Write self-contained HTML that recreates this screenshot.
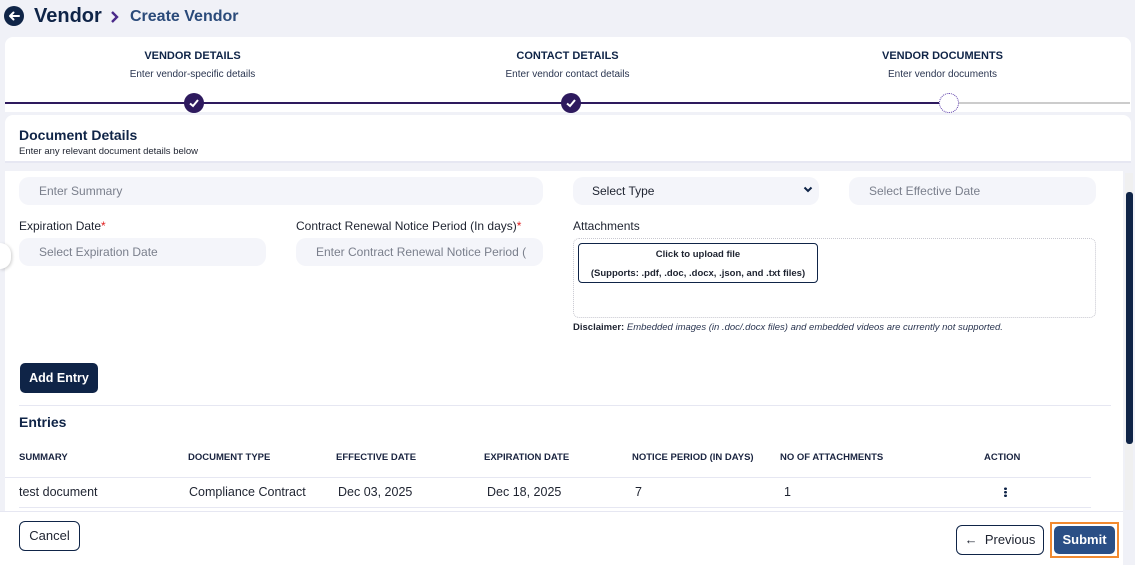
<!DOCTYPE html>
<html><head><meta charset="utf-8"><style>
*{box-sizing:border-box;margin:0;padding:0}
body{width:1135px;height:565px;overflow:hidden;background:#f0f1f7;font-family:"Liberation Sans",sans-serif;position:relative;color:#1a2440}
.a{position:absolute}
.inp{position:absolute;background:#f4f5fa;border-radius:10px;height:28px;font-size:12px;color:#7a7f8c;padding:7px 0 0 20px}
.lbl{position:absolute;font-size:12px;color:#1e2330}
.th{position:absolute;font-size:9.5px;font-weight:bold;color:#1a2440;top:452px}
.td{position:absolute;font-size:12.5px;color:#1e2330;top:485px}
.hl{position:absolute;height:1px;background:#e6e7f2}
</style></head><body>
<div class="a" style="left:4px;top:6px;width:20px;height:20px;border-radius:50%;background:#0f2447"></div>
<svg class="a" style="left:4px;top:6px" width="20" height="20" viewBox="0 0 20 20"><path d="M15 10H6M9.5 6.5L6 10l3.5 3.5" stroke="#fff" stroke-width="2" fill="none" stroke-linecap="round" stroke-linejoin="round"/></svg>
<div class="a" style="left:34px;top:5px;font-size:20px;font-weight:bold;color:#0f2447">Vendor</div>
<svg class="a" style="left:110px;top:10px" width="10" height="14" viewBox="0 0 10 14"><path d="M2 2l5 5-5 5" stroke="#4a2a8a" stroke-width="2.4" fill="none"/></svg>
<div class="a" style="left:130px;top:8px;font-size:16px;font-weight:bold;color:#2a4a7a">Create Vendor</div>
<div class="a" style="left:5px;top:37px;width:1126px;height:75px;background:#fff;border-radius:8px 8px 0 0"></div>
<div class="a" style="left:5px;top:50px;width:375px;text-align:center;font-size:11px;font-weight:bold;color:#0f2447">VENDOR DETAILS</div>
<div class="a" style="left:5px;top:69px;width:375px;text-align:center;font-size:10px;color:#2a3550">Enter vendor-specific details</div>
<div class="a" style="left:380px;top:50px;width:375px;text-align:center;font-size:11px;font-weight:bold;color:#0f2447">CONTACT DETAILS</div>
<div class="a" style="left:380px;top:69px;width:375px;text-align:center;font-size:10px;color:#2a3550">Enter vendor contact details</div>
<div class="a" style="left:755px;top:50px;width:375px;text-align:center;font-size:11px;font-weight:bold;color:#0f2447">VENDOR DOCUMENTS</div>
<div class="a" style="left:755px;top:69px;width:375px;text-align:center;font-size:10px;color:#2a3550">Enter vendor documents</div>
<div class="a" style="left:5px;top:102px;width:935px;height:2px;background:#2e1a5e"></div>
<div class="a" style="left:958px;top:102px;width:172px;height:2px;background:#ccc"></div>
<div class="a" style="left:184px;top:93px;width:20px;height:20px;border-radius:50%;background:#2e1a5e"></div>
<div class="a" style="left:561px;top:93px;width:20px;height:20px;border-radius:50%;background:#2e1a5e"></div>
<svg class="a" style="left:184px;top:93px" width="20" height="20"><path d="M6 10.5l3 2.5 5-6" stroke="#fff" stroke-width="2" fill="none"/></svg>
<svg class="a" style="left:561px;top:93px" width="20" height="20"><path d="M6 10.5l3 2.5 5-6" stroke="#fff" stroke-width="2" fill="none"/></svg>
<div class="a" style="left:939px;top:93px;width:20px;height:20px;border-radius:50%;background:#fff;border:1.5px dotted #5a3aa8"></div>
<div class="a" style="left:5px;top:115px;width:1126px;height:48px;background:#fff;border-radius:8px 8px 0 0;border-bottom:2px solid #e6e7f2"></div>
<div class="a" style="left:19px;top:127px;font-size:14px;font-weight:bold;color:#0f2447">Document Details</div>
<div class="a" style="left:19px;top:146px;font-size:9.5px;color:#1e2330">Enter any relevant document details below</div>
<div class="a" style="left:5px;top:171px;width:1118px;height:340px;background:#fff"></div>
<div class="a" style="left:1125px;top:173px;width:8px;height:337px;background:#f0f0f0"></div>
<div class="a" style="left:1126px;top:192px;width:7px;height:252px;background:#0f2447;border-radius:3px"></div>
<div class="inp" style="left:19px;top:177px;width:524px">Enter Summary</div>
<div class="inp" style="left:573px;top:177px;width:246px;color:#1e2330;padding-left:19px">Select Type</div>
<svg class="a" style="left:803px;top:186px" width="10" height="8"><path d="M1.5 1.5l3.5 3.5 3.5-3.5" stroke="#0f2447" stroke-width="2" fill="none"/></svg>
<div class="inp" style="left:849px;top:177px;width:247px">Select Effective Date</div>
<div class="lbl" style="left:19px;top:219px">Expiration Date<span style="color:#e02020">*</span></div>
<div class="lbl" style="left:296px;top:219px">Contract Renewal Notice Period (In days)<span style="color:#e02020">*</span></div>
<div class="lbl" style="left:573px;top:219px">Attachments</div>
<div class="inp" style="left:19px;top:238px;width:247px">Select Expiration Date</div>
<div class="inp" style="left:296px;top:238px;width:247px">Enter Contract Renewal Notice Period (</div>
<div class="a" style="left:0;top:243px;width:11px;height:26px;border-radius:0 13px 13px 0;background:#fff;box-shadow:1px 1px 3px rgba(0,0,0,.2)"></div>
<div class="a" style="left:573px;top:238px;width:523px;height:80px;border:1px dotted #c8c8d0;border-radius:6px"></div>
<div class="a" style="left:578px;top:243px;width:240px;height:40px;border:1.5px solid #0f2447;border-radius:4px;text-align:center;font-size:9.5px;font-weight:bold;color:#1e2330;padding-top:1px;line-height:19px">Click to upload file<br>(Supports: .pdf, .doc, .docx, .json, and .txt files)</div>
<div class="a" style="left:573px;top:322px;font-size:9.5px;color:#2a3550"><b style="color:#1e2330">Disclaimer:</b> <i>Embedded images (in .doc/.docx files) and embedded videos are currently not supported.</i></div>
<div class="a" style="left:20px;top:363px;width:78px;height:30px;background:#0f2447;border-radius:5px;color:#fff;font-size:12.5px;font-weight:bold;text-align:center;line-height:30px">Add Entry</div>
<div class="hl" style="left:19px;top:405px;width:1092px"></div>
<div class="a" style="left:19px;top:414px;font-size:14px;font-weight:bold;color:#0f2447">Entries</div>
<div class="th" style="left:19px">SUMMARY</div>
<div class="th" style="left:188px">DOCUMENT TYPE</div>
<div class="th" style="left:336px">EFFECTIVE DATE</div>
<div class="th" style="left:484px">EXPIRATION DATE</div>
<div class="th" style="left:632px">NOTICE PERIOD (IN DAYS)</div>
<div class="th" style="left:780px">NO OF ATTACHMENTS</div>
<div class="th" style="left:984px">ACTION</div>
<div class="hl" style="left:5px;top:477px;width:1086px"></div>
<div class="td" style="left:19px">test document</div>
<div class="td" style="left:189px">Compliance Contract</div>
<div class="td" style="left:338px">Dec 03, 2025</div>
<div class="td" style="left:487px">Dec 18, 2025</div>
<div class="td" style="left:635px">7</div>
<div class="td" style="left:784px">1</div>
<div class="a" style="left:1004px;top:487px;width:3px;height:10px;background:radial-gradient(circle,#0f2447 1.3px,transparent 1.5px) 0 0/3px 3.5px"></div>
<div class="hl" style="left:19px;top:507px;width:1072px"></div>
<div class="a" style="left:0;top:511px;width:1123px;height:54px;background:#fff;border-top:1px solid #e6e7f2"></div>
<div class="a" style="left:19px;top:521px;width:61px;height:30px;border:1.3px solid #0f2447;border-radius:6px;font-size:13px;color:#1e2330;text-align:center;line-height:28px">Cancel</div>
<div class="a" style="left:956px;top:525px;width:88px;height:30px;border:1.3px solid #0f2447;border-radius:6px;font-size:13px;color:#1e2330;text-align:center;line-height:28px">&#8592;&nbsp; Previous</div>
<div class="a" style="left:1050px;top:522px;width:69px;height:36px;border:2px solid #f28a30"></div>
<div class="a" style="left:1054px;top:526px;width:61px;height:28px;background:#2a4f86;border-radius:5px;color:#fff;font-size:13px;font-weight:bold;text-align:center;line-height:28px">Submit</div>
</body></html>
